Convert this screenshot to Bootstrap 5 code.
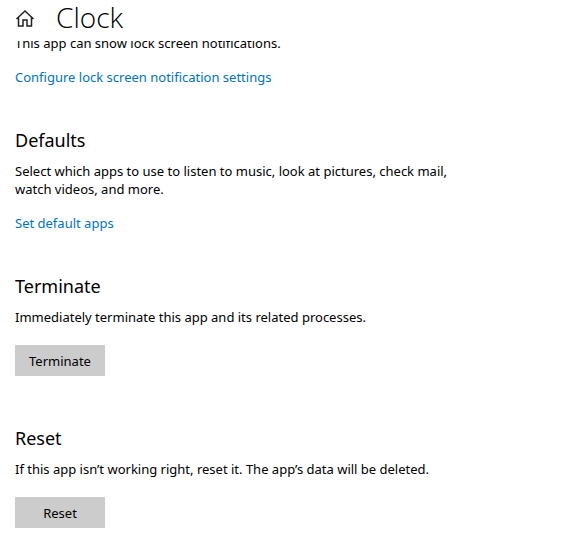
<!DOCTYPE html>
<html lang="en">
<head>
<meta charset="utf-8">
<meta name="viewport" content="width=device-width, initial-scale=1">
<title>Clock</title>
<link href="https://cdn.jsdelivr.net/npm/bootstrap@5.3.0/dist/css/bootstrap.min.css" rel="stylesheet">
<style>
body { font-family: "Noto Sans", "Open Sans", sans-serif; font-size: 13px; line-height: 18px; color: #000; background: #fff; }
.app-header { padding: 0 15px 6px; gap: 21px; }
.app-header h1 { font-family: "Open Sans", sans-serif; font-size: 28px; line-height: 35px; font-weight: 300; }
.home-link { color: #222; }
.scroll-pane { padding: 0 15px; }
.clipped-line { height: 11px; }
.settings-link { color: #0074bd; text-decoration: none; }
.settings-section { padding-top: 40px; }
.settings-section h2 { font-size: 18px; line-height: 28px; font-weight: 400; margin-bottom: 8px; }
.settings-copy { max-width: 450px; }
.settings-action { padding: 3px 0 8px; }
.btn-settings { --bs-btn-bg: #ccc; --bs-btn-hover-bg: #bbb; --bs-btn-color: #000; --bs-btn-font-size: 13px; --bs-btn-line-height: 18px; width: 90px; height: 31px; }
</style>
</head>
<body>
<header class="app-header d-flex align-items-center">
<a href="#" aria-label="Home" class="home-link d-flex"><svg width="20" height="20" viewBox="0 0 20 20" fill="none" stroke="currentColor" stroke-width="1.500"><path d="M1.500 11 10 3 18.500 11M3.500 9.500V18H8V12H12V18H16.500V9.500"/></svg></a>
<h1 class="mb-0">Clock</h1>
</header>
<main class="scroll-pane">
<div class="clipped-line overflow-hidden d-flex align-items-end"><p class="mb-0">This app can show lock screen notifications.</p></div>
<p class="mb-0 pt-3"><a class="settings-link" href="#">Configure lock screen notification settings</a></p>
<section class="settings-section">
<h2>Defaults</h2>
<p class="settings-copy mb-3">Select which apps to use to listen to music, look at pictures, check mail, watch videos, and more.</p>
<a class="settings-link" href="#">Set default apps</a>
</section>
<section class="settings-section">
<h2>Terminate</h2>
<p class="mb-3">Immediately terminate this app and its related processes.</p>
<div class="settings-action d-flex"><button type="button" class="btn btn-settings border-0 rounded-0 p-0">Terminate</button></div>
</section>
<section class="settings-section">
<h2>Reset</h2>
<p class="mb-3">If this app isn’t working right, reset it. The app’s data will be deleted.</p>
<div class="settings-action d-flex"><button type="button" class="btn btn-settings border-0 rounded-0 p-0">Reset</button></div>
</section>
</main>
</body>
</html>
